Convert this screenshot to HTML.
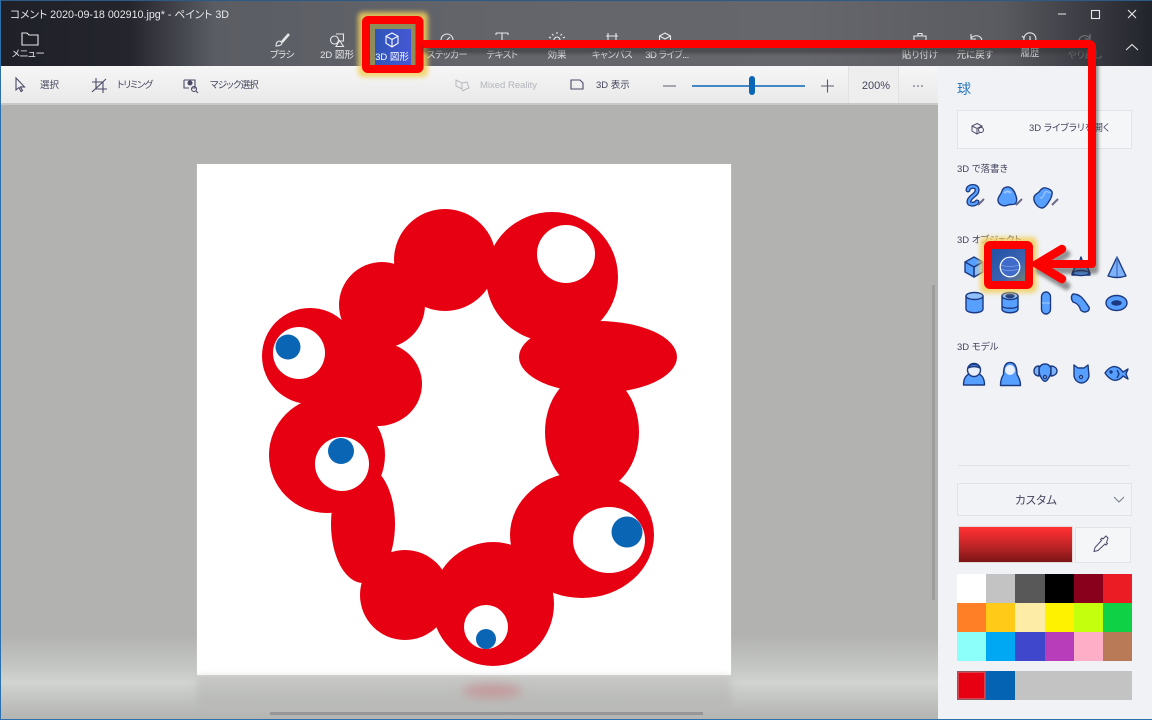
<!DOCTYPE html>
<html lang="ja"><head><meta charset="utf-8"><title>ペイント 3D</title>
<style>
html,body{margin:0;padding:0;width:1152px;height:720px;overflow:hidden;background:#b3b4b2}
body{position:relative;font-family:"Liberation Sans","Noto Sans CJK JP",sans-serif;font-feature-settings:"palt"}
div{position:absolute;box-sizing:border-box}
.t{white-space:nowrap;line-height:14px;height:14px;font-size:9.5px;color:#44445e;filter:blur(.2px)}
.c{transform:translateX(-50%)}
.w{color:#e6e8ea}
.n{letter-spacing:-.45px}
svg{position:absolute;left:0;top:0}
#title{left:0;top:0;width:1152px;height:66px;background:linear-gradient(90deg,#1f2028 0,#24252d 130px,#5b5d64 215px,#63656b 500px,#66676c 800px,#5a5b61 1000px,#3a3b42 1090px,#22242b 1152px)}
#bar{left:0;top:66px;width:938px;height:39px;background:linear-gradient(180deg,#f6f6f6,#e9e9e9);border-bottom:2px solid #c9c9c7}
#zoombg{left:848px;top:66px;width:51px;height:37px;background:#eeeeee;border-left:1px solid #e2e2e2;border-right:1px solid #e2e2e2}
#panel{left:938px;top:66px;width:214px;height:654px;background:#f0f2f5}
#cv{left:0;top:105px;width:938px;height:615px;background:linear-gradient(180deg,#b2b3b1 0,#b2b3b1 530px,#c4c6c3 562px,#d2d4d1 578px,#c6c8c5 590px,#b6b7b5 610px,#b5b6b4 615px)}
#paper{left:197px;top:164px;width:534px;height:511px;background:#fff;box-shadow:0 1px 1px #d8d8d8}
#refl{left:197px;top:677px;width:534px;height:30px;background:linear-gradient(180deg,#c0c1bf,#b4b5b3);filter:blur(4px);opacity:.7}
#sb{left:270px;top:712px;width:433px;height:3px;background:#969696}
#sv{left:932px;top:285px;width:3px;height:315px;background:#9c9d9c}
.box{background:#f5f6f8;border:1px solid #e1e3e7}
</style></head><body>
<div id="title"></div>
<div style="left:0;top:0;width:1152px;height:1px;background:#2b5a85"></div>
<div id="cv"></div>
<div id="paper"></div>
<div id="refl"></div>
<div id="bar"></div>
<div id="zoombg"></div>
<div id="panel"></div>
<div id="sb"></div>
<div id="sv"></div>
<div style="left:0;top:0;width:1px;height:720px;background:#2c70ab"></div>
<div style="left:0;top:719px;width:1152px;height:1px;background:#2c70ab"></div>

<div class="t w" style="left:10px;top:8px;font-size:10.7px">コメント 2020-09-18 002910.jpg* - ペイント 3D</div>
<div class="t w c n" style="left:28px;top:48px">メニュー</div>
<div class="t w c n" style="left:282px;top:49px">ブラシ</div>
<div class="t w c" style="left:337px;top:49px">2D 図形</div>
<div class="t w c n" style="left:447px;top:49px">ステッカー</div>
<div class="t w c n" style="left:502px;top:49px">テキスト</div>
<div class="t w c" style="left:557px;top:49px">効果</div>
<div class="t w c n" style="left:612px;top:49px">キャンバス</div>
<div class="t w c n" style="left:667px;top:49px">3D ライブ...</div>
<div class="t w c" style="left:920px;top:49px">貼り付け</div>
<div class="t w c" style="left:975px;top:49px">元に戻す</div>
<div class="t w c" style="left:1030px;top:47px">履歴</div>
<div class="t c" style="left:1085px;top:49px;color:#6f7076">やり直し</div>

<div class="t" style="left:40px;top:79px">選択</div>
<div class="t n" style="left:117px;top:79px;letter-spacing:-1px">トリミング</div>
<div class="t n" style="left:210px;top:79px;letter-spacing:-.8px">マジック選択</div>
<div class="t" style="left:480px;top:79px;color:#b3b5bc">Mixed Reality</div>
<div class="t" style="left:596px;top:79px">3D 表示</div>
<div class="t c" style="left:876px;top:79px;font-size:11px">200%</div>

<div class="t" style="left:957px;top:82px;font-size:14px;color:#2a78bd">球</div>
<div class="box" style="left:957px;top:110px;width:175px;height:39px"></div>
<div class="t" style="left:1029px;top:122px">3D ライブラリを開く</div>
<div class="t" style="left:957px;top:163px">3D で落書き</div>
<div class="t" style="left:957px;top:234px">3D オブジェクト</div>
<div class="t" style="left:957px;top:341px">3D モデル</div>
<div style="left:958px;top:465px;width:172px;height:1px;background:#e0e2e6"></div>
<div class="box" style="left:957px;top:483px;width:175px;height:33px;background:#f1f3f6"></div>
<div class="t c" style="left:1036px;top:494px;font-size:11.5px">カスタム</div>
<div style="left:958px;top:526px;width:115px;height:37px;background:linear-gradient(180deg,#ff3335 0,#ec2c2e 20%,#a82022 70%,#7c1416 100%);border:1px solid #e3d9d9"></div>
<div class="box" style="left:1075px;top:527px;width:56px;height:36px"></div>

<div style="left:957px;top:574px;width:29px;height:29px;background:#fff"></div><div style="left:986px;top:574px;width:29px;height:29px;background:#c3c3c3"></div><div style="left:1015px;top:574px;width:30px;height:29px;background:#585858"></div><div style="left:1045px;top:574px;width:29px;height:29px;background:#000"></div><div style="left:1074px;top:574px;width:29px;height:29px;background:#88001b"></div><div style="left:1103px;top:574px;width:29px;height:29px;background:#ec1c24"></div>
<div style="left:957px;top:603px;width:29px;height:29px;background:#ff7f27"></div><div style="left:986px;top:603px;width:29px;height:29px;background:#ffca18"></div><div style="left:1015px;top:603px;width:30px;height:29px;background:#fdeca6"></div><div style="left:1045px;top:603px;width:29px;height:29px;background:#fff200"></div><div style="left:1074px;top:603px;width:29px;height:29px;background:#c4ff0e"></div><div style="left:1103px;top:603px;width:29px;height:29px;background:#0ed145"></div>
<div style="left:957px;top:632px;width:29px;height:29px;background:#8cfffb"></div><div style="left:986px;top:632px;width:29px;height:29px;background:#00a8f3"></div><div style="left:1015px;top:632px;width:30px;height:29px;background:#3f48cc"></div><div style="left:1045px;top:632px;width:29px;height:29px;background:#b83dba"></div><div style="left:1074px;top:632px;width:29px;height:29px;background:#ffaec8"></div><div style="left:1103px;top:632px;width:29px;height:29px;background:#b97a57"></div>

<div style="left:957px;top:671px;width:175px;height:29px;background:#c3c3c3"></div>
<div style="left:957px;top:671px;width:29px;height:29px;background:#e60012;border:2px solid #d7424f;outline:1px solid #8a5a60;outline-offset:-1px"></div>
<div style="left:986px;top:671px;width:29px;height:29px;background:#0563b4"></div>

<svg width="1152" height="720" viewBox="0 0 1152 720">
<defs>
<linearGradient id="bf" x1="0" y1="0" x2="1" y2="0"><stop offset="0" stop-color="#2f55b8"/><stop offset="1" stop-color="#4558d6"/></linearGradient>
<linearGradient id="sf" x1="0" y1="0" x2="1" y2="1"><stop offset="0" stop-color="#1c50a4"/><stop offset=".6" stop-color="#3c62b0"/><stop offset="1" stop-color="#7f8a60"/></linearGradient>
<filter id="gl" x="-30%" y="-30%" width="160%" height="160%"><feGaussianBlur stdDeviation="2.5"/></filter>
<filter id="bl" x="-50%" y="-50%" width="200%" height="200%"><feGaussianBlur stdDeviation="5"/></filter>
<filter id="sh" x="-5%" y="-5%" width="110%" height="110%"><feGaussianBlur stdDeviation="1.5"/></filter>
</defs>

<!-- artwork -->
<g fill="#e60012">
<circle cx="445" cy="260" r="51"/>
<circle cx="382" cy="305" r="43"/>
<circle cx="310" cy="356" r="48"/>
<circle cx="345" cy="360" r="40"/>
<ellipse cx="378" cy="384" rx="44" ry="42"/>
<circle cx="327" cy="455" r="58"/>
<ellipse cx="363" cy="524" rx="32" ry="59"/>
<circle cx="405" cy="595" r="45"/>
<ellipse cx="493" cy="604" rx="61" ry="62"/>
<ellipse cx="582" cy="535" rx="72" ry="63"/>
<ellipse cx="592" cy="432" rx="47" ry="60"/>
<ellipse cx="598" cy="357" rx="79" ry="36"/>
<ellipse cx="552" cy="277" rx="66" ry="65"/>
</g>
<g fill="#fff">
<circle cx="299" cy="353" r="26"/><ellipse cx="342" cy="464" rx="27" ry="27"/><circle cx="486" cy="627" r="22"/><ellipse cx="609" cy="540" rx="36" ry="33"/><circle cx="566" cy="254" r="29"/>
</g>
<g fill="#0a66b5">
<circle cx="288" cy="347" r="12.5"/><circle cx="341" cy="451" r="13"/><circle cx="486" cy="639" r="10"/><circle cx="627" cy="532" r="15.5"/>
</g>
<ellipse cx="492" cy="691" rx="30" ry="7" fill="#c39a9c" filter="url(#bl)"/>

<!-- top toolbar icons -->
<g fill="none" stroke="#e6e8ea" stroke-width="1.1">
<path d="M22 33h5l2 2h9v10H22z"/>
<path d="M289 34l-7 8" stroke-width="2.500"/><path d="M276 46c0-3 1-5 4-5l2 2c0 2-3 3-6 3z"/>
<circle cx="334.500" cy="40" r="4"/><path d="M336 34h7.500v7h-3M336 46.500l3.500-6 4 6z"/>
<path d="M441 40a6 6 0 1 1 12 0M447 40l3-3"/>
<path d="M496 33h12M502 33v8M496 33v2M508 33v2"/>
<circle cx="557" cy="40" r="3"/><path d="M557 32v2M551 38l-2-1M563 38l2-1M552 34l1.500 1.500M562 34l-1.500 1.500"/>
<path d="M606 36h12M608 33v7M616 33v7"/>
<path d="M665 33l5.500 3v5h-11v-5zM659.500 36l5.500 3 5.500-3"/>
<path d="M914 36h12v5h-12zM918 36v-2.500h4V36"/>
<path d="M971 34v5h5M971 38c3-3 8-3 10 0 1 1 1 2 0 3"/>
<path d="M1024 40a6 6 0 1 1 11 2M1030 36v4l3 1M1022 36l2 2"/>
<path d="M1090 34v5h-5M1090 38c-3-3-8-3-10 0-1 1-1 2 0 3" stroke="#77787d"/>
<path d="M1058 14h8" stroke-width="1"/>
<rect x="1091.500" y="10.500" width="8" height="8"/>
<path d="M1128 10l8 8M1136 10l-8 8M1126 50l6-5.500 6 5.500"/>
</g>

<!-- second toolbar icons -->
<g fill="none" stroke="#4a4a68" stroke-width="1.100">
<path d="M16 78v12l3-2.500 2 4 1.500-.8-2-3.800h4z"/>
<path d="M96 78v11h11M92 82h11v11M92 92l14-13"/>
<path d="M184 80h11v8h-3M184 80v8h5"/><circle cx="190" cy="83" r="2" fill="#4a4a68"/><circle cx="194" cy="89" r="2.500"/><path d="M196 91l2 2"/>
<path d="M571 80h9l3 3v6h-12z"/>
<path d="M663 86h13M821 86h13M827.500 79.500v13" stroke="#5d5d72"/>
</g>
<g fill="none" stroke="#b6b8be" stroke-width="1"><path d="M456 80l6 3v6l-6-3zM462 83l5-1 2 6-7 3"/></g>
<path d="M692 86h113" stroke="#0a66b5" stroke-width="1.600"/>
<rect x="749" y="76" width="6" height="19" rx="3" fill="#0a66b5"/>
<g fill="#4a4a68"><circle cx="914" cy="86" r=".8"/><circle cx="918" cy="86" r=".8"/><circle cx="922" cy="86" r=".8"/></g>

<!-- panel icons -->
<g fill="none" stroke="#4a4a68" stroke-width="1">
<path d="M977 123.500l5 2.500v5l-5 3-5-3v-5zM972 126l5 2.500 5-2.500M977 128.500v5"/><circle cx="981" cy="130" r="2.500" fill="#f5f6f8"/>
<path d="M1114 497l5 5 5-5" stroke="#777b8a"/>
<path d="M1108 538l-2-2-3 3-1-1-1.500 1.500 1 1-6.500 7-1 4 4-1 7-6.500 1 1 1.500-1.500-1-1z"/>
</g>

<g stroke="#1c3a82" stroke-width="1.400" fill="#58a0ff" stroke-linejoin="round">
<path d="M968 190c0-4 8-5 9-1 1 6-7 7-8 12-1 4 6 4 8 1" fill="none" stroke="#1c3a82" stroke-width="5" stroke-linecap="round"/>
<path d="M968 190c0-4 8-5 9-1 1 6-7 7-8 12-1 4 6 4 8 1" fill="none" stroke="#58a0ff" stroke-width="2.400" stroke-linecap="round"/>
<path d="M998 200c0-4 3-5 4-9 1-4 6-5 9-3 3 2 4 5 5 8s1 6-1 8c-3 1-5 0-7 1-4 2-10 0-10-5z"/>
<path d="M1004 193c2-2 5-2 7 0" fill="none" stroke="#9ec6fb" stroke-width="2"/>
<path d="M1034 197c1-3 3-3 5-5 2-3 4-5 7-4 4 1 7 3 6 6 0 3-2 6-4 9-2 3-4 5-6 5-4 0-9-6-8-11z"/>
<path d="M1040 198c3 0 4-3 5-6 2-1 4 0 6 1" fill="none" stroke="#9ec6fb" stroke-width="1.200"/>
<path d="M978 205l6-6M1016 205l6-6M1052 205l6-6" fill="none" stroke="#6a6a84" stroke-width="2"/>

<path d="M974 257l9 5v10l-9 5-9-5v-10z"/><path d="M974 267l9-5v10l-9 5z" fill="#8fc0fa"/><path d="M965 262l9 5 9-5M974 267v10" fill="none"/>
<path d="M1081 257l2 6c3 1 7 8 7 12h-18c0-4 5-11 7-12z" fill="#7db2f8"/>
<ellipse cx="1081" cy="273" rx="8" ry="2.500"/>
<path d="M1117 257l9 19c-6 2-12 2-18 0z" fill="#7db2f8"/><path d="M1117 257v20" fill="none" stroke="#4a78c8"/>

<path d="M966 296v13c0 5 17 5 17 0v-13z"/><ellipse cx="974.500" cy="296" rx="8.500" ry="3.500" fill="#8fc0fa"/>
<path d="M1002 296v13c0 5 16 5 16 0v-13z"/><ellipse cx="1010" cy="296" rx="8" ry="3.500" fill="#8fc0fa"/><ellipse cx="1010" cy="296" rx="4" ry="1.500" fill="#1c3a82"/><path d="M1002 306c2 3 14 3 16 0" fill="none"/>
<rect x="1041.500" y="292" width="9" height="22" rx="4.500"/><path d="M1042 303h8" fill="none" stroke="#8fc0fa"/>
<path d="M1073 294c8 0 11 6 16 13 1 3-1 5-5 5-3-1-4-2-4-4-2-4-4-5-7-6-2-3-2-6 0-8z"/>
<ellipse cx="1116.500" cy="303" rx="10.500" ry="7.500"/><ellipse cx="1116.500" cy="303" rx="4.500" ry="2" fill="#1c3a82"/>

<path d="M963.500 385c0-8 4-12 10.500-12s10.500 4 10.500 12z"/><circle cx="974" cy="370" r="6.500" fill="#e9f0fb"/><path d="M968 368c1-5 11-5 12 0-4-2-8-2-12 0z"/>
<path d="M1000.500 385.500c0-4 1-8 3-11 0-6 1-12 6.500-12s7 6 7 12c2 3 3.500 7 3.500 11z"/><circle cx="1010" cy="370" r="5" fill="#e9f0fb" stroke="none"/>
<path d="M1039 368c2-3 3-4 6-4s4 1 6 4c0 6-1 8-3 11-2 3-4 3-6 0-2-3-3-5-3-11z"/><path d="M1039 366c-3 0-5 2-5 5 0 3 2 5 5 5zM1051 366c3 0 6 2 6 5 0 3-3 5-6 5z" fill="#7db2f8"/><circle cx="1045" cy="377" r="1.500" fill="#e9f0fb"/>
<path d="M1074 365l4 3h6l4-3 1 11c-1 5-5 7-7.500 7s-6.500-2-7.500-7z"/><circle cx="1081" cy="377" r="1.500" fill="#e9f0fb"/>
<path d="M1105 373c4-6 9-8 14-5 2 1 3 3 4 4l5-3-2 5 2 5-5-3c-2 3-6 5-10 4-3-1-6-4-8-7z"/><circle cx="1111" cy="372" r="1" fill="#1c3a82"/><path d="M1117 370l2 4-2 4" fill="none"/>
</g>

<!-- highlight: 3D shape button -->
<rect x="358" y="12" width="70" height="65" rx="5" fill="#f3cf5a" opacity=".85" filter="url(#gl)"/>
<rect x="366" y="20" width="53" height="49" rx="1" fill="#8e8c58"/>
<rect x="375" y="29" width="36" height="36" fill="url(#bf)"/>
<path d="M392 33l6 3.200v7L392 47l-6-3.800v-7zM386 36.200l6 3.300 6-3.300M392 39.500V47" fill="none" stroke="#fff" stroke-width="1.100"/>
<text x="392" y="60" text-anchor="middle" font-size="9.500" fill="#fff" font-family="'Liberation Sans','Noto Sans CJK JP',sans-serif">3D 図形</text>
<rect x="366" y="20" width="53.500" height="49" rx="2" fill="none" stroke="#f00" stroke-width="8"/>

<!-- highlight: sphere -->
<rect x="980" y="237" width="57" height="56" rx="5" fill="#f3cf5a" opacity=".85" filter="url(#gl)"/>
<rect x="988" y="245" width="41" height="40" fill="url(#sf)"/>
<circle cx="1010" cy="267" r="9.800" fill="#3f6ccb" stroke="#fff" stroke-width="1.200"/>
<path d="M1001 265c5 2 13 2 18 0M1001 269c5 2 13 2 18 0" fill="none" stroke="#7fa0e0" stroke-width=".7"/>
<rect x="988" y="245" width="41" height="40" rx="2" fill="none" stroke="#f00" stroke-width="8"/>

<!-- arrow shadow -->
<path d="M423 46.500H1089a3 3 0 0 1 3 3V267H1040M1064 251l-27 16 27 16" transform="translate(2.500,3)" fill="none" stroke="#333" stroke-opacity=".5" stroke-width="8" stroke-linejoin="round" stroke-linecap="round" filter="url(#sh)"/>
<!-- arrow -->
<path d="M423 44H1089a3 3 0 0 1 3 3V264H1040" fill="none" stroke="#f00" stroke-width="8" stroke-linejoin="round"/>
<path d="M1062 249l-25 15 25 15" fill="none" stroke="#f00" stroke-width="8.500" stroke-linecap="round" stroke-linejoin="miter"/>
</svg>
</body></html>
